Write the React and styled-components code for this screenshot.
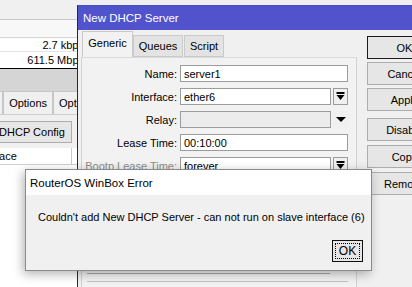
import React from 'react';
import styled, { createGlobalStyle } from 'styled-components';

const Global = createGlobalStyle`
  html, body { margin: 0; padding: 0; }
  body {
    width: 412px; height: 287px; overflow: hidden; background: #fff;
    font-family: "Liberation Sans", Arial, sans-serif; font-size: 11px; color: #000;
  }
  #root { width: 412px; height: 287px; }
`;

const Desktop = styled.div`
  position: relative;
  width: 412px;
  height: 287px;
  overflow: hidden;
  background: #fff;
`;

/* ---------- background window ---------- */
const BackWindow = styled.div`
  position: absolute;
  left: 0;
  top: 0;
  width: 412px;
  height: 287px;
  display: flex;
  flex-direction: column;
  background: #fff;
`;

const Toolbar = styled.div`
  height: 19px;
  flex: none;
  background: #f0f0f0;
  border-bottom: 1px solid #c8c8c8;
`;

const ListHead = styled.div`
  height: 17px;
  flex: none;
  background: #f8f8f8;
  border-bottom: 1px solid #d4d4d4;
`;

const DataRow = styled.div`
  height: ${(p) => p.$h}px;
  flex: none;
  display: flex;
  align-items: center;
  background: #fff;
  border-bottom: 1px solid ${(p) => (p.$last ? '#000' : '#e4e4e4')};
`;

const RateCell = styled.div`
  width: 84px;
  flex: none;
  text-align: right;
  font-size: 11px;
  white-space: nowrap;
`;

const GrayBand = styled.div`
  height: 22px;
  flex: none;
  background: #d5d5d5;
`;

const TabStrip = styled.div`
  height: 23px;
  flex: none;
  display: flex;
  margin-left: -48px;
  background: #d5d5d5;
`;

const BackTab = styled.div`
  height: 23px;
  flex: none;
  padding: 0 5px;
  display: flex;
  align-items: center;
  background: #f0f0f0;
  border: 1px solid #c6c6c6;
  border-bottom: none;
  box-sizing: border-box;
  white-space: nowrap;
`;

const BackPane = styled.div`
  flex: none;
  background: #f0f0f0;
  padding: 6px 0 5px;
  border-top: 1px solid #cfcfcf;
`;

const BackButton = styled.div`
  margin-left: -8px;
  width: 80px;
  height: 22px;
  box-sizing: border-box;
  display: flex;
  align-items: center;
  justify-content: center;
  background: #e6e6e6;
  border: 1px solid #adadad;
  white-space: nowrap;
`;

const ColHeadRow = styled.div`
  height: 16px;
  flex: none;
  display: flex;
  background: #fff;
  border-bottom: 1px solid #d0d0d0;
`;

const ColHead = styled.div`
  margin-left: -29px;
  width: 101px;
  flex: none;
  padding-left: 3px;
  box-sizing: border-box;
  display: flex;
  align-items: center;
  border-right: 1px solid #c8c8c8;
  white-space: nowrap;
`;

/* ---------- DHCP window ---------- */
const DhcpWindow = styled.div`
  position: absolute;
  left: 77px;
  top: 5px;
  width: 372px;
  height: 295px;
  box-sizing: border-box;
  border-left: 1px solid #2a2a2a;
  border-top: 1px solid #4a4cc4;
  background: #f0f0f0;
  display: flex;
  flex-direction: column;
`;

const TitleBar = styled.div`
  height: 24px;
  flex: none;
  background: #5153cd;
  color: #fff;
  display: flex;
  align-items: center;
  padding-left: 5px;
  font-size: 11.5px;
`;

const WinBody = styled.div`
  flex: 1;
  display: flex;
  padding-left: 3px;
`;

const MainCol = styled.div`
  width: 276px;
  flex: none;
  display: flex;
  flex-direction: column;
  padding-top: 1px;
`;

const Tabs = styled.div`
  display: flex;
  align-items: flex-end;
  height: 26px;
  margin-left: 1px;
`;

const Tab = styled.div`
  height: ${(p) => (p.$active ? 26 : 22)}px;
  width: ${(p) => p.$w}px;
  flex: none;
  box-sizing: border-box;
  display: flex;
  align-items: center;
  justify-content: center;
  padding-bottom: ${(p) => (p.$active ? 3 : 0)}px;
  background: ${(p) => (p.$active ? '#f2f2f2' : '#e3e3e3')};
  border: 1px solid #cacaca;
  border-bottom: ${(p) => (p.$active ? 'none' : '1px solid #cacaca')};
  margin-right: ${(p) => (p.$active ? 0 : 1)}px;
`;

const Panel = styled.div`
  flex: 1;
  box-sizing: border-box;
  border: 1px solid #d2d2d2;
  border-top: 1px solid #dadada;
  background: #f2f2f2;
  padding: 7px 8px 0 0;
  display: flex;
  flex-direction: column;
  gap: 6px;
`;

const FormRow = styled.div`
  display: flex;
  align-items: center;
  height: 17px;
`;

const Label = styled.div`
  width: 95px;
  flex: none;
  text-align: right;
  padding-right: 3px;
  white-space: nowrap;
  color: ${(p) => (p.$dim ? '#8c8c8c' : '#000')};
`;

const Field = styled.div`
  flex: 1;
  height: 17px;
  box-sizing: border-box;
  border: 1px solid #9c9c9c;
  background: ${(p) => (p.$disabled ? '#ececec' : '#fff')};
  padding-left: 3px;
  display: flex;
  align-items: center;
  white-space: nowrap;
`;

const DropBtn = styled.div`
  width: 15px;
  height: 17px;
  flex: none;
  margin-left: 2px;
  box-sizing: border-box;
  border: ${(p) => (p.$plain ? 'none' : '1px solid #9c9c9c')};
  background: #f0f0f0;
  display: flex;
  align-items: center;
  justify-content: center;
`;

const BottomGroove = styled.div`
  margin-top: 93px;
  margin-left: 5px;
  width: 243px;
  height: 7px;
  border-top: 1px solid #a8a8a8;
`;

const BottomLine = styled.div`
  margin-left: 5px;
  margin-top: -6px;
  height: 0;
  border-top: 1px solid #c4c4c4;
`;

const ButtonCol = styled.div`
  flex: none;
  display: flex;
  flex-direction: column;
  margin-left: 10px;
  padding-top: 6px;
`;

const SideButton = styled.div`
  width: 75px;
  height: 23px;
  box-sizing: border-box;
  margin-top: ${(p) => p.$mt}px;
  border: 1px solid ${(p) => (p.$default ? '#1a1a1a' : '#adadad')};
  background: #e6e6e6;
  display: flex;
  align-items: center;
  justify-content: center;
  white-space: nowrap;
`;

/* ---------- error dialog ---------- */
const ErrorDialog = styled.div`
  position: absolute;
  left: 25px;
  top: 169px;
  width: 347px;
  height: 102px;
  box-sizing: border-box;
  border: 1px solid #8a8a8a;
  background: #f0f0f0;
  box-shadow: -2px 3px 10px rgba(0, 0, 0, 0.3);
  display: flex;
  flex-direction: column;
`;

const DlgTitle = styled.div`
  height: 25px;
  flex: none;
  background: #fff;
  display: flex;
  align-items: center;
  padding-left: 4px;
  font-size: 11.5px;
`;

const DlgBody = styled.div`
  flex: 1;
  display: flex;
  flex-direction: column;
  justify-content: space-between;
`;

const Message = styled.div`
  padding: 16px 0 0 12px;
  white-space: nowrap;
`;

const DlgButtons = styled.div`
  display: flex;
  justify-content: flex-end;
  padding: 0 8px 8px 0;
`;

const OkButton = styled.div`
  position: relative;
  width: 31px;
  height: 22px;
  box-sizing: border-box;
  border: 1px solid #111;
  background: #e6e6e6;
  display: flex;
  align-items: center;
  justify-content: center;
  font-size: 12px;
  &::after {
    content: '';
    position: absolute;
    inset: 2px;
    border: 1px dotted #000;
  }
`;

const ListIcon = () => (
  <svg width="9" height="9" viewBox="0 0 9 9">
    <rect x="0.5" y="0" width="8" height="2" fill="#000" />
    <polygon points="0.5,3 8.5,3 4.5,8" fill="#000" />
  </svg>
);

const DownTri = () => (
  <svg width="10" height="6" viewBox="0 0 10 6">
    <polygon points="0,0 10,0 5,5" fill="#000" />
  </svg>
);

export default function App() {
  return (
    <>
      <Global />
      <Desktop>
        <BackWindow>
          <Toolbar />
          <ListHead />
          <DataRow $h={13}>
            <RateCell>2.7 kbps</RateCell>
          </DataRow>
          <DataRow $h={16} $last>
            <RateCell>611.5 Mbps</RateCell>
          </DataRow>
          <GrayBand />
          <TabStrip>
            <BackTab>General</BackTab>
            <BackTab>Options</BackTab>
            <BackTab>Options</BackTab>
          </TabStrip>
          <BackPane>
            <BackButton>DHCP Config</BackButton>
          </BackPane>
          <ColHeadRow>
            <ColHead>Interface</ColHead>
          </ColHeadRow>
        </BackWindow>

        <DhcpWindow>
          <TitleBar>New DHCP Server</TitleBar>
          <WinBody>
            <MainCol>
              <Tabs>
                <Tab $active $w={51}>Generic</Tab>
                <Tab $w={50}>Queues</Tab>
                <Tab $w={40}>Script</Tab>
              </Tabs>
              <Panel>
                <FormRow>
                  <Label>Name:</Label>
                  <Field>server1</Field>
                </FormRow>
                <FormRow>
                  <Label>Interface:</Label>
                  <Field>ether6</Field>
                  <DropBtn><ListIcon /></DropBtn>
                </FormRow>
                <FormRow>
                  <Label>Relay:</Label>
                  <Field $disabled />
                  <DropBtn $plain><DownTri /></DropBtn>
                </FormRow>
                <FormRow>
                  <Label>Lease Time:</Label>
                  <Field>00:10:00</Field>
                </FormRow>
                <FormRow>
                  <Label $dim>Bootp Lease Time:</Label>
                  <Field>forever</Field>
                  <DropBtn><ListIcon /></DropBtn>
                </FormRow>
                <BottomGroove />
                <BottomLine />
              </Panel>
            </MainCol>
            <ButtonCol>
              <SideButton $default $mt={0}>OK</SideButton>
              <SideButton $mt={3}>Cancel</SideButton>
              <SideButton $mt={3}>Apply</SideButton>
              <SideButton $mt={7}>Disable</SideButton>
              <SideButton $mt={4}>Copy</SideButton>
              <SideButton $mt={4}>Remove</SideButton>
            </ButtonCol>
          </WinBody>
        </DhcpWindow>

        <ErrorDialog>
          <DlgTitle>RouterOS WinBox Error</DlgTitle>
          <DlgBody>
            <Message>Couldn't add New DHCP Server - can not run on slave interface (6)</Message>
            <DlgButtons>
              <OkButton>OK</OkButton>
            </DlgButtons>
          </DlgBody>
        </ErrorDialog>
      </Desktop>
    </>
  );
}
